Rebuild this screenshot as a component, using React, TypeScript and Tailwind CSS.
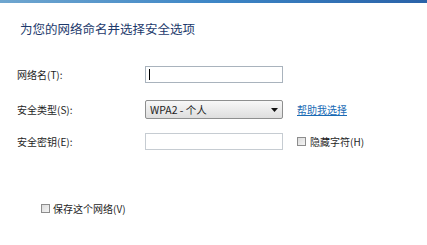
export default function App() {
  const font = { fontFamily: '"Microsoft YaHei", "Noto Sans CJK SC", sans-serif' };
  return (
    <div className="w-[427px] h-[245px] bg-white overflow-hidden text-[#1e1e1e]" style={font}>
      <div className="h-[3px] bg-gradient-to-r from-[#6fa6cf] via-[#3d86c6] to-[#2a62a8]" />
      <div className="pl-[20px] pt-[18px] text-[12.5px] leading-[15px] text-[#1d3a6c]">为您的网络命名并选择安全选项</div>

      <div className="mt-[30px] flex flex-col pl-[17px]">
        <div className="flex items-center h-[17px]">
          <span className="w-[128px] text-[10px]">网络名(T):</span>
          <div className="w-[138px] h-[17px] border border-[#a9b3bd] bg-white flex items-center pl-[3px]">
            <div className="w-px h-[11px] bg-black" />
          </div>
        </div>

        <div className="mt-[17px] flex items-center h-[19px]">
          <span className="w-[128px] text-[10px]">安全类型(S):</span>
          <div className="w-[138px] h-[19px] border border-[#8e8f8f] rounded-[2px] bg-gradient-to-b from-[#f8f8f8] to-[#dedede] flex items-center justify-between px-[4px]">
            <span className="text-[10.5px]">WPA2 - 个人</span>
            <svg width="7" height="4" viewBox="0 0 7 4"><path d="M0 0h7L3.5 4z" fill="#111" /></svg>
          </div>
          <span className="ml-[14px] text-[10px] text-[#1a6bb5] underline">帮助我选择</span>
        </div>

        <div className="mt-[14px] flex items-center h-[17px]">
          <span className="w-[128px] text-[10px]">安全密钥(E):</span>
          <div className="w-[138px] h-[17px] border border-[#c6ccd2] bg-white" />
          <div className="ml-[14px] flex items-center gap-[4px]">
            <div className="w-[9px] h-[9px] border border-[#8d8d8d] bg-gradient-to-br from-[#dcdcdc] to-[#f4f4f4]" />
            <span className="text-[10px]">隐藏字符(H)</span>
          </div>
        </div>
      </div>

      <div className="mt-[51px] ml-[41px] flex items-center gap-[3px]">
        <div className="w-[9px] h-[9px] border border-[#8d8d8d] bg-gradient-to-br from-[#dcdcdc] to-[#f4f4f4]" />
        <span className="text-[10px]">保存这个网络(V)</span>
      </div>
    </div>
  );
}
